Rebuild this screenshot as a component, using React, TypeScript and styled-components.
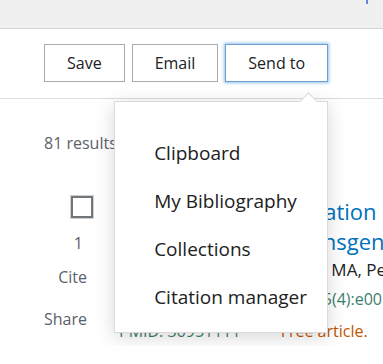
import styled, { createGlobalStyle } from "styled-components";

const MENU_ITEMS = ["Clipboard", "My Bibliography", "Collections", "Citation manager"];

function App() {
  return (
    <>
      <GlobalStyle />
      <TopBar>
        <TopMark />
      </TopBar>
      <ActionBar>
        <ActionButton>Save</ActionButton>
        <ActionButton>Email</ActionButton>
        <SendToWrap>
          <ActionButton $active>Send to</ActionButton>
          <Dropdown>
            <DropdownArrow />
            {MENU_ITEMS.map((item) => (
              <MenuItem key={item}>{item}</MenuItem>
            ))}
          </Dropdown>
        </SendToWrap>
      </ActionBar>
      <Results>
        <ResultCount>81 results</ResultCount>
        <Article>
          <SideColumn>
            <Checkbox />
            <ResultNumber>1</ResultNumber>
            <SideLink $gap={7}>Cite</SideLink>
            <SideLink $gap={12}>Share</SideLink>
          </SideColumn>
          <Docsum>
            <Title>Legal Gender Affirmation and Health</Title>
            <Title>Records of Adult transgender People</Title>
            <Authors>Kaplan JT, Schulman AB, Li MA, Perez JL, et al.</Authors>
            <Citation>Transgend Health. 2023 Jul;5(4):e0012.</Citation>
            <Meta>
              <Pmid>PMID: 36951111</Pmid>
              <FreeTag>Free article.</FreeTag>
            </Meta>
          </Docsum>
        </Article>
      </Results>
    </>
  );
}

const GlobalStyle = createGlobalStyle`
  body {
    margin: 0;
    background: #ffffff;
    font-family: "Open Sans", "Noto Sans", sans-serif;
    color: #212121;
    overflow: hidden;
  }
`;

const TopBar = styled.div`
  height: 28px;
  background: #f0f0f0;
  border-bottom: 1px solid #d4d4d4;
  display: flex;
  justify-content: flex-end;
  padding-right: 15px;
`;

const TopMark = styled.div`
  width: 2px;
  height: 4px;
  background: linear-gradient(90deg, #8f8fe8, #5a7ad6);
`;

const ActionBar = styled.div`
  display: flex;
  gap: 7px;
  padding: 15px 0 16px 44px;
  border-bottom: 1px solid #dcdcdc;
`;

const SendToWrap = styled.div`
  position: relative;
`;

const ActionButton = styled.button<{ $active?: boolean }>`
  height: 38px;
  padding: 0 22px;
  background: #ffffff;
  border: 1px solid ${(p) => (p.$active ? "#6f9fcf" : "#aaaaaa")};
  box-shadow: ${(p) => (p.$active ? "0 0 3px 1px #8fc1ea" : "none")};
  font-family: inherit;
  font-size: 16px;
  color: #212121;
  cursor: pointer;
`;

const Dropdown = styled.div`
  position: absolute;
  top: 57px;
  right: 0;
  width: 212px;
  padding: 27px 0 11px;
  background: #ffffff;
  border: 1px solid #dadada;
  box-shadow: 0 4px 18px rgba(0, 0, 0, 0.16);
  z-index: 2;
`;

const DropdownArrow = styled.div`
  position: absolute;
  top: -7px;
  right: 12px;
  width: 12px;
  height: 12px;
  background: #ffffff;
  border-top: 1px solid #dadada;
  border-left: 1px solid #dadada;
  transform: rotate(45deg);
`;

const MenuItem = styled.div`
  height: 48px;
  line-height: 48px;
  padding-left: 39px;
  font-size: 19px;
  color: #212121;
  white-space: nowrap;
`;

const Results = styled.div`
  padding: 32px 0 0 44px;
`;

const ResultCount = styled.div`
  font-size: 16px;
  color: #5b616b;
  line-height: 24px;
`;

const Article = styled.div`
  display: flex;
  margin-top: 41px;
`;

const SideColumn = styled.div`
  width: 56px;
  display: flex;
  flex-direction: column;
  align-items: flex-end;
  padding-right: 12px;
  box-sizing: border-box;
  color: #5b616b;
  font-size: 16px;
`;

const Checkbox = styled.div`
  width: 18px;
  height: 18px;
  margin-right: -6px;
  border: 2px solid #71767a;
  outline: 1px solid #d0d0d0;
`;

const ResultNumber = styled.div`
  margin: 13px 4px 0 0;
  line-height: 24px;
`;

const SideLink = styled.div<{ $gap: number }>`
  margin-top: ${(p) => p.$gap}px;
  line-height: 30px;
`;

const Docsum = styled.div`
  flex: none;
  width: 420px;
  padding-left: 20px;
  white-space: nowrap;
`;

const Title = styled.div`
  font-size: 22px;
  line-height: 30px;
  color: #0071bc;
`;

const Authors = styled.div`
  font-size: 17px;
  line-height: 28px;
  color: #212121;
`;

const Citation = styled.div`
  font-size: 16px;
  line-height: 30px;
  color: #3d7d6d;
`;

const Meta = styled.div`
  display: flex;
  gap: 40px;
  margin-top: 2px;
  font-size: 16px;
  line-height: 30px;
`;

const Pmid = styled.span`
  color: #3d7d6d;
`;

const FreeTag = styled.span`
  color: #c05600;
`;

export default App;
